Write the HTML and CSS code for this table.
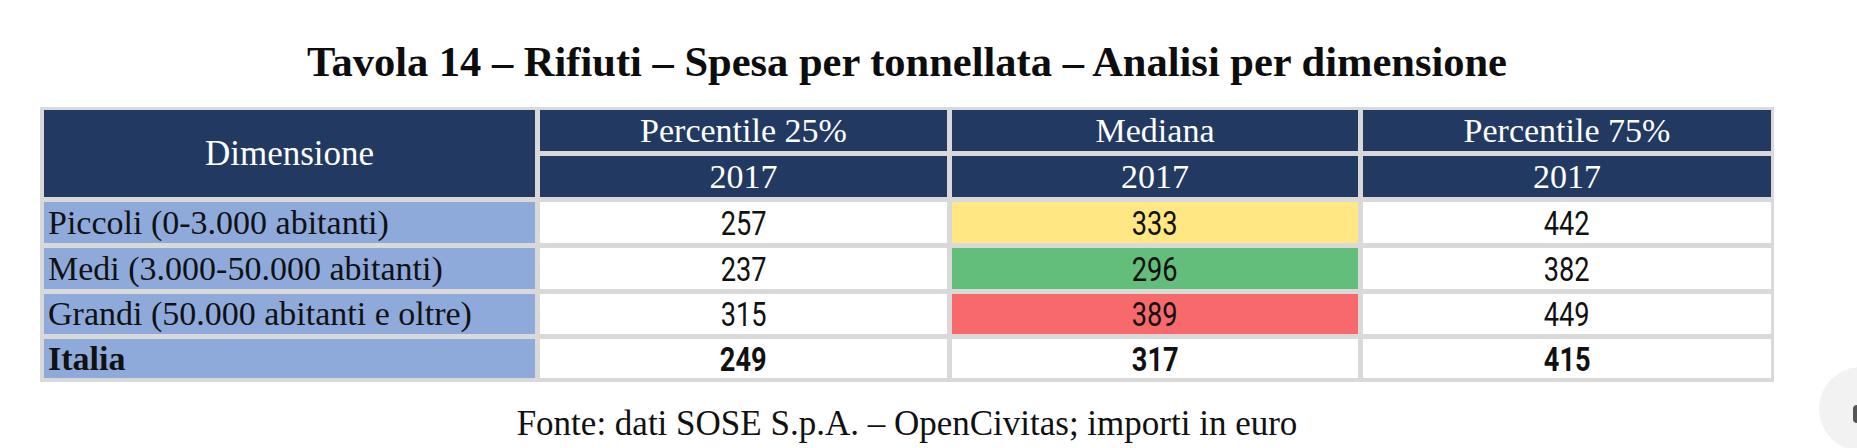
FILE: index.html
```html
<!DOCTYPE html>
<html lang="it">
<head>
<meta charset="utf-8">
<title>Tavola 14 – Rifiuti</title>
<link rel="stylesheet" href="styles.css">
</head>
<body>
<div class="page">
  <h1 class="title">Tavola 14 – Rifiuti – Spesa per tonnellata – Analisi per dimensione</h1>
  <div class="table">
    <div class="cell head dim">Dimensione</div>
    <div class="cell head">Percentile 25%</div>
    <div class="cell head">Mediana</div>
    <div class="cell head">Percentile 75%</div>
    <div class="cell head">2017</div>
    <div class="cell head">2017</div>
    <div class="cell head">2017</div>

    <div class="cell label">Piccoli (0-3.000 abitanti)</div>
    <div class="cell num"><span>257</span></div>
    <div class="cell num yellow"><span>333</span></div>
    <div class="cell num"><span>442</span></div>

    <div class="cell label">Medi (3.000-50.000 abitanti)</div>
    <div class="cell num"><span>237</span></div>
    <div class="cell num green"><span>296</span></div>
    <div class="cell num"><span>382</span></div>

    <div class="cell label">Grandi (50.000 abitanti e oltre)</div>
    <div class="cell num"><span>315</span></div>
    <div class="cell num red"><span>389</span></div>
    <div class="cell num"><span>449</span></div>

    <div class="cell label bold">Italia</div>
    <div class="cell num bold"><span>249</span></div>
    <div class="cell num bold"><span>317</span></div>
    <div class="cell num bold"><span>415</span></div>
  </div>
  <p class="source">Fonte: dati SOSE S.p.A. – OpenCivitas; importi in euro</p>
</div>
<div class="fab"><span class="fab-mark"></span></div>
</body>
</html>
```

FILE: styles.css
```css
html, body {
  margin: 0;
  padding: 0;
  background: #ffffff;
}

body {
  width: 1857px;
  height: 448px;
  overflow: hidden;
  position: relative;
  font-family: "Liberation Serif", "Times New Roman", serif;
  color: #111111;
}

.page {
  width: 1734px;
  margin-left: 40px;
  padding-top: 38px;
}

.title {
  margin: 0;
  font-size: 42.5px;
  line-height: 48px;
  font-weight: 700;
  text-align: center;
  color: #0d0d0d;
}

.table {
  margin-top: 21px;
  display: grid;
  grid-template-columns: 491px 407px 406px 408px;
  grid-template-rows: 41px 41px 41px 41px 40px 39px;
  gap: 5px;
  padding: 3px 3px 4px 4px;
  background: #d9d9d9;
}

.cell {
  display: flex;
  align-items: center;
  justify-content: center;
  background: #ffffff;
  font-size: 34px;
  line-height: 1;
  white-space: nowrap;
}

.head {
  background: #223962;
  color: #ffffff;
}

.dim {
  grid-row: 1 / span 2;
  font-size: 35px;
}

.label {
  justify-content: flex-start;
  padding-left: 4px;
  background: #8eaadb;
  color: #111111;
}

.num {
  font-family: "Roboto", "Liberation Sans", sans-serif;
  font-size: 34px;
  color: #111111;
}

.num span {
  display: inline-block;
  transform: scaleX(0.8);
}

.bold {
  font-weight: 700;
}

.yellow { background: #ffe783; }
.green { background: #63be7b; }
.red { background: #f8696b; }

.source {
  margin: 22px 0 0;
  font-size: 35px;
  line-height: 40px;
  text-align: center;
  color: #111111;
}

.fab {
  position: absolute;
  left: 1819px;
  top: 367px;
  width: 84px;
  height: 84px;
  border-radius: 50%;
  background: #f2f2f2;
}

.fab-mark {
  position: absolute;
  left: 34px;
  top: 38px;
  width: 8px;
  height: 18px;
  border-radius: 4px 0 0 4px;
  background: #555555;
}
```
